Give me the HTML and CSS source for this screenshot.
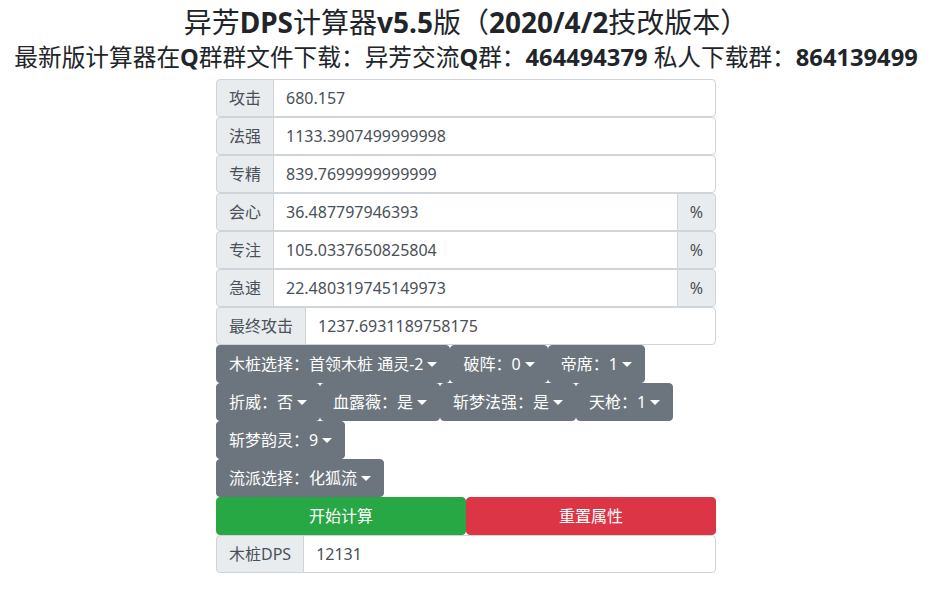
FILE: index.html
```html
<!DOCTYPE html>
<html lang="zh-CN">
<head>
    <meta charset="UTF-8">
    <meta name="viewport" content="width=device-width, initial-scale=1.0">
    <title>异芳DPS计算器</title>
    <link rel="stylesheet" href="styles.css">
</head>
<body>

    <div class="page">
        <h3 class="title">异芳<b>DPS</b>计算器<b>v5.5</b>版（<b>2020/4/2</b>技改版本）</h3>
        <h4 class="subtitle">最新版计算器在<b>Q</b>群群文件下载：异芳交流<b>Q</b>群：<b>464494379</b> 私人下载群：<b>864139499</b></h4>

        <div class="calc">
            <div class="input-group">
                <span class="group-text">攻击</span>
                <input type="text" class="field" value="680.157">
            </div>
            <div class="input-group">
                <span class="group-text">法强</span>
                <input type="text" class="field" value="1133.3907499999998">
            </div>
            <div class="input-group">
                <span class="group-text">专精</span>
                <input type="text" class="field" value="839.7699999999999">
            </div>
            <div class="input-group">
                <span class="group-text">会心</span>
                <input type="text" class="field" value="36.487797946393">
                <span class="group-text append">%</span>
            </div>
            <div class="input-group">
                <span class="group-text">专注</span>
                <input type="text" class="field" value="105.0337650825804">
                <span class="group-text append">%</span>
            </div>
            <div class="input-group">
                <span class="group-text">急速</span>
                <input type="text" class="field" value="22.480319745149973">
                <span class="group-text append">%</span>
            </div>
            <div class="input-group">
                <span class="group-text">最终攻击</span>
                <input type="text" class="field" value="1237.6931189758175">
            </div>

            <div class="dropdowns">
                <button class="btn-gray dropdown-toggle">木桩选择：首领木桩 通灵-2</button>
                <button class="btn-gray dropdown-toggle">破阵：0</button>
                <button class="btn-gray dropdown-toggle">帝席：1</button>
                <button class="btn-gray dropdown-toggle">折威：否</button>
                <button class="btn-gray dropdown-toggle">血露薇：是</button>
                <button class="btn-gray dropdown-toggle">斩梦法强：是</button>
                <button class="btn-gray dropdown-toggle">天枪：1</button>
                <button class="btn-gray dropdown-toggle">斩梦韵灵：9</button>
            </div>
            <div class="dropdowns">
                <button class="btn-gray dropdown-toggle">流派选择：化狐流</button>
            </div>

            <div class="actions">
                <button class="btn-green">开始计算</button>
                <button class="btn-red">重置属性</button>
            </div>

            <div class="input-group">
                <span class="group-text">木桩DPS</span>
                <input type="text" class="field" value="12131">
            </div>
        </div>
    </div>

</body>
</html>
```

FILE: styles.css
```css
body {
    margin: 0;
    font-family: "Noto Sans", "Noto Sans CJK SC", sans-serif;
    font-size: 16px;
    line-height: 1.5;
    color: #212529;
    background-color: #ffffff;
}

.page {
    width: 932px;
}

.title {
    margin: 0;
    padding-top: 3px;
    font-size: 28px;
    font-weight: 400;
    line-height: 39px;
    text-align: center;
}

.subtitle {
    margin: 0 0 7px;
    font-size: 23.7px;
    font-weight: 400;
    line-height: 30px;
    text-align: center;
}

.title b, .subtitle b {
    font-weight: 700;
}

.calc {
    width: 500px;
    margin: 0 auto;
}

.input-group {
    display: flex;
    height: 38px;
}

.group-text {
    display: flex;
    align-items: center;
    padding: 0 12px;
    background-color: #e9ecef;
    border: 1px solid #ced4da;
    border-radius: 4px 0 0 4px;
    color: #495057;
    white-space: nowrap;
}

.group-text.append {
    border-radius: 0 4px 4px 0;
    margin-left: -1px;
}

.field {
    flex: 1;
    min-width: 0;
    margin-left: -1px;
    padding: 0 12px;
    font-family: inherit;
    font-size: 16px;
    color: #495057;
    border: 1px solid #ced4da;
    border-radius: 0 4px 4px 0;
    outline: none;
}

.input-group .field:not(:last-child) {
    border-radius: 0;
}

.dropdowns {
    display: flex;
    flex-wrap: wrap;
}

button {
    font-family: inherit;
    font-size: 16px;
    line-height: 24px;
    height: 38px;
    padding: 6px 12px;
    border: 1px solid transparent;
    border-radius: 4px;
    color: #ffffff;
    cursor: pointer;
}

.btn-gray {
    background-color: #6c757d;
    border-color: #6c757d;
}

.dropdown-toggle::after {
    content: "";
    display: inline-block;
    margin-left: 4px;
    vertical-align: 3px;
    border-top: 5px solid;
    border-right: 5px solid transparent;
    border-left: 5px solid transparent;
}

.actions {
    display: flex;
}

.actions button {
    flex: 1;
}

.btn-green {
    background-color: #28a745;
    border-color: #28a745;
}

.btn-red {
    background-color: #dc3545;
    border-color: #dc3545;
}
```
